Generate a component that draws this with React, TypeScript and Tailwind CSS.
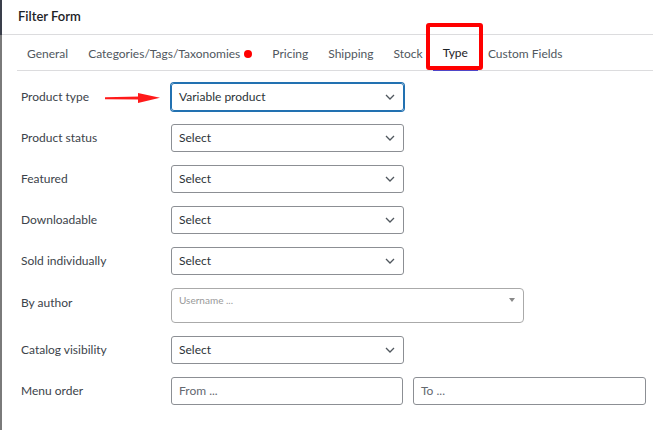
import React from "react";

const font = { fontFamily: '"Segoe UI", Lato, "Liberation Sans", sans-serif' };

function Chevron() {
  return (
    <svg width="10" height="6" viewBox="0 0 10 6" className="absolute right-[8px] top-1/2 -translate-y-1/2">
      <path d="M1 1 L5 5 L9 1" fill="none" stroke="#50575e" strokeWidth="1.3" />
    </svg>
  );
}

function SelectBox({ value, focused }: { value: string; focused?: boolean }) {
  return (
    <div
      className={
        focused
          ? "relative w-[233px] h-[28px] rounded-[3px] border border-[#2271b1] shadow-[0_0_0_1px_#2271b1] flex items-center pl-[7px] text-[12px] text-[#2c3338]"
          : "relative w-[233px] h-[28px] rounded-[3px] border border-[#8c8f94] flex items-center pl-[7px] text-[12px] text-[#2c3338]"
      }
    >
      {value}
      <Chevron />
    </div>
  );
}

function Row({ label, children, labelClass }: { label: string; children: React.ReactNode; labelClass?: string }) {
  return (
    <div className="flex items-center">
      <div className={labelClass ? "w-[150px] text-[12px] text-[#3c434a] pb-[6px]" : "w-[150px] text-[12px] text-[#3c434a]"}>{label}</div>
      {children}
    </div>
  );
}

export default function App() {
  const tabs = ["General", "Categories/Tags/Taxonomies", "Pricing", "Shipping", "Stock", "Type", "Custom Fields"];
  return (
    <div className="relative w-[653px] h-[430px] bg-white flex overflow-hidden" style={font}>
      <div className="w-[2px] flex flex-col">
        <div className="h-[35px] bg-[#3a3f4b]" />
        <div className="flex-1 bg-[#7a7a7a]" />
      </div>
      <div className="flex-1 flex flex-col">
        <div className="h-[35px] border-b border-[#dcdcde] flex items-center pl-[16px] text-[13px] font-semibold text-[#1d2327]">
          Filter Form
        </div>
        <div className="ml-[15px] h-[36px] border-b border-[#dcdcde] flex items-stretch">
          {tabs.map((t) => (
            <div
              key={t}
              className={
                t === "Type"
                  ? "px-[10px] pt-[2px] flex items-center text-[12px] text-[#1d2327] border-b-2 border-[#4f46c8] -mb-px"
                  : "px-[10px] pt-[2px] flex items-center text-[12px] text-[#50575e]"
              }
            >
              {t}
              {t === "Categories/Tags/Taxonomies" && (
                <span className="ml-[4px] w-[8px] h-[8px] rounded-full bg-[#ff0000] inline-block" />
              )}
            </div>
          ))}
        </div>
        <div className="pl-[19px] pt-[12px] flex flex-col gap-[13px]">
          <Row label="Product type">
            <SelectBox value="Variable product" focused />
          </Row>
          <Row label="Product status">
            <SelectBox value="Select" />
          </Row>
          <Row label="Featured">
            <SelectBox value="Select" />
          </Row>
          <Row label="Downloadable">
            <SelectBox value="Select" />
          </Row>
          <Row label="Sold individually">
            <SelectBox value="Select" />
          </Row>
          <Row label="By author" labelClass="raised">
            <div className="relative w-[353px] h-[35px] rounded-[4px] border border-[#aaaaaa] pl-[7px] pt-[4px] text-[10px] text-[#999999]">
              Username ...
              <span className="absolute right-[8px] top-[9px] w-0 h-0 border-l-[3px] border-r-[3px] border-t-[4px] border-l-transparent border-r-transparent border-t-[#888888]" />
            </div>
          </Row>
          <Row label="Catalog visibility">
            <SelectBox value="Select" />
          </Row>
          <Row label="Menu order">
            <div className="flex gap-[10px]">
              <div className="w-[232px] h-[28px] rounded-[3px] border border-[#8c8f94] flex items-center pl-[7px] text-[12px] text-[#646970]">
                From ...
              </div>
              <div className="w-[233px] h-[28px] rounded-[3px] border border-[#8c8f94] flex items-center pl-[7px] text-[12px] text-[#646970]">
                To ...
              </div>
            </div>
          </Row>
        </div>
      </div>
      {/* annotations */}
      <div className="absolute left-[426px] top-[23px] w-[57px] h-[47px] border-[4px] border-[#ff0000] rounded-[3px]" />
      <svg className="absolute left-[100px] top-[90px]" width="64" height="16" viewBox="0 0 64 16">
        <path d="M5 7.2 L40 6.6 L40 9.4 L5 9.2 Z" fill="#ff1a1a" />
        <path d="M38 3 L60 7.8 L38 13 Z" fill="#ff1a1a" />
      </svg>
    </div>
  );
}
